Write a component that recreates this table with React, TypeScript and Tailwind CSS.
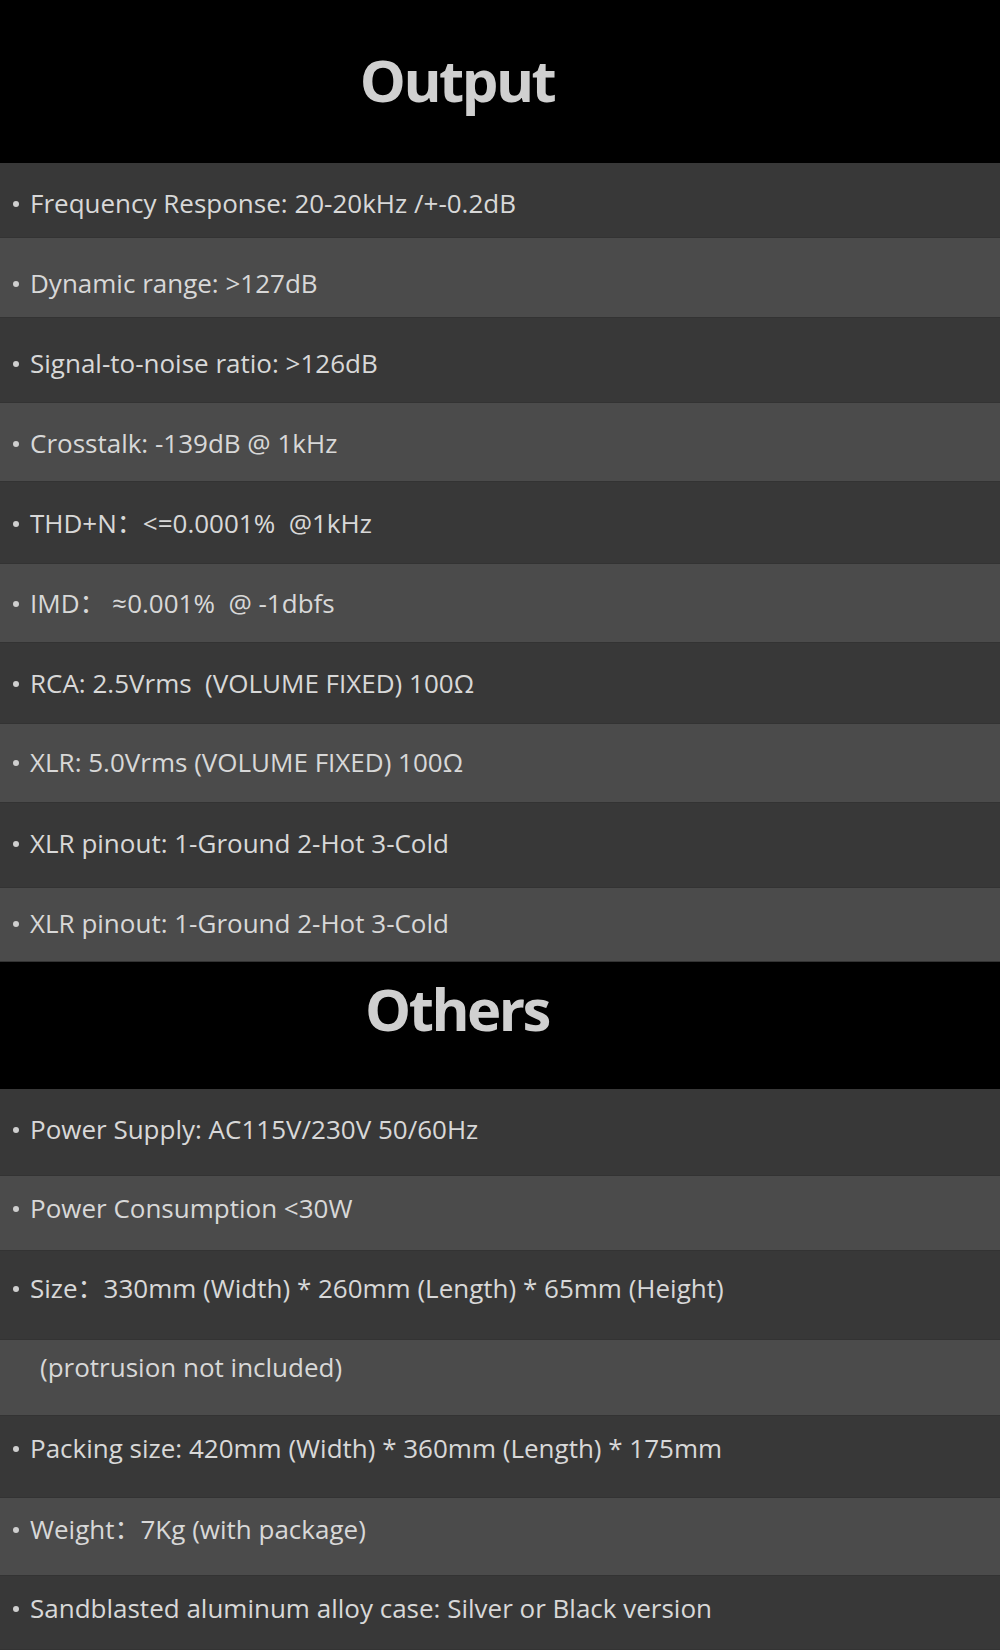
import React from "react";

type Row = { text: string; cls: string; bullet?: boolean };

const output: Row[] = [
  { text: "Frequency Response: 20-20kHz /+-0.2dB", cls: "h-[75px] pt-[27px] bg-[#383838]" },
  { text: "Dynamic range: >127dB", cls: "h-[80px] pt-[32px] bg-[#4b4b4b]" },
  { text: "Signal-to-noise ratio: >126dB", cls: "h-[85px] pt-[32px] bg-[#383838]" },
  { text: "Crosstalk: -139dB @ 1kHz", cls: "h-[79px] pt-[27px] bg-[#4b4b4b]" },
  { text: "THD+N：<=0.0001%  @1kHz", cls: "h-[82px] pt-[28px] bg-[#383838]" },
  { text: "IMD： ≈0.001%  @ -1dbfs", cls: "h-[79px] pt-[26px] bg-[#4b4b4b]" },
  { text: "RCA: 2.5Vrms  (VOLUME FIXED) 100Ω", cls: "h-[81px] pt-[27px] bg-[#383838]" },
  { text: "XLR: 5.0Vrms (VOLUME FIXED) 100Ω", cls: "h-[79px] pt-[25px] bg-[#4b4b4b]" },
  { text: "XLR pinout: 1-Ground 2-Hot 3-Cold", cls: "h-[85px] pt-[27px] bg-[#383838]" },
  { text: "XLR pinout: 1-Ground 2-Hot 3-Cold", cls: "h-[74px] pt-[22px] bg-[#4b4b4b]" },
];

const others: Row[] = [
  { text: "Power Supply: AC115V/230V 50/60Hz", cls: "h-[87px] pt-[27px] bg-[#383838]" },
  { text: "Power Consumption <30W", cls: "h-[75px] pt-[19px] bg-[#4b4b4b]" },
  { text: "Size：330mm (Width) * 260mm (Length) * 65mm (Height)", cls: "h-[89px] pt-[24px] bg-[#383838]" },
  { text: "(protrusion not included)", cls: "h-[76px] pt-[14px] bg-[#4b4b4b]", bullet: false },
  { text: "Packing size: 420mm (Width) * 360mm (Length) * 175mm", cls: "h-[82px] pt-[19px] bg-[#383838]" },
  { text: "Weight：7Kg (with package)", cls: "h-[78px] pt-[18px] bg-[#4b4b4b]" },
  { text: "Sandblasted aluminum alloy case: Silver or Black version", cls: "h-[74px] pt-[19px] bg-[#383838]" },
];

function SpecRow({ row }: { row: Row }) {
  const showBullet = row.bullet !== false;
  return (
    <div className={`${row.cls} w-full border-b border-[#333333]`}>
      <div className="flex items-baseline pl-[13px] text-[26px] leading-[26px] text-[#d8d8d8] whitespace-pre">
        {showBullet ? (
          <span className="inline-block w-[6px] h-[6px] rounded-full bg-[#cfcfcf] mr-[11px] -translate-y-[6px]" />
        ) : (
          <span className="inline-block w-[27px]" />
        )}
        <span>{row.text}</span>
      </div>
    </div>
  );
}

export default function App() {
  return (
    <div
      className="w-[1000px] h-[1650px] bg-black overflow-hidden"
      style={{ fontFamily: '"Open Sans", "Noto Sans CJK SC", sans-serif' }}
    >
      <div className="h-[163px] pt-[51px] flex justify-center pr-[86px]">
        <h1 className="text-[58px] leading-[58px] font-bold text-[#d0d0d0] tracking-[-2.5px]">Output</h1>
      </div>
      {output.map((r, i) => (
        <SpecRow key={`o${i}`} row={r} />
      ))}
      <div className="h-[127px] pt-[18px] flex justify-center pr-[86px]">
        <h1 className="text-[58px] leading-[58px] font-bold text-[#d0d0d0] tracking-[-2.5px]">Others</h1>
      </div>
      {others.map((r, i) => (
        <SpecRow key={`x${i}`} row={r} />
      ))}
    </div>
  );
}
